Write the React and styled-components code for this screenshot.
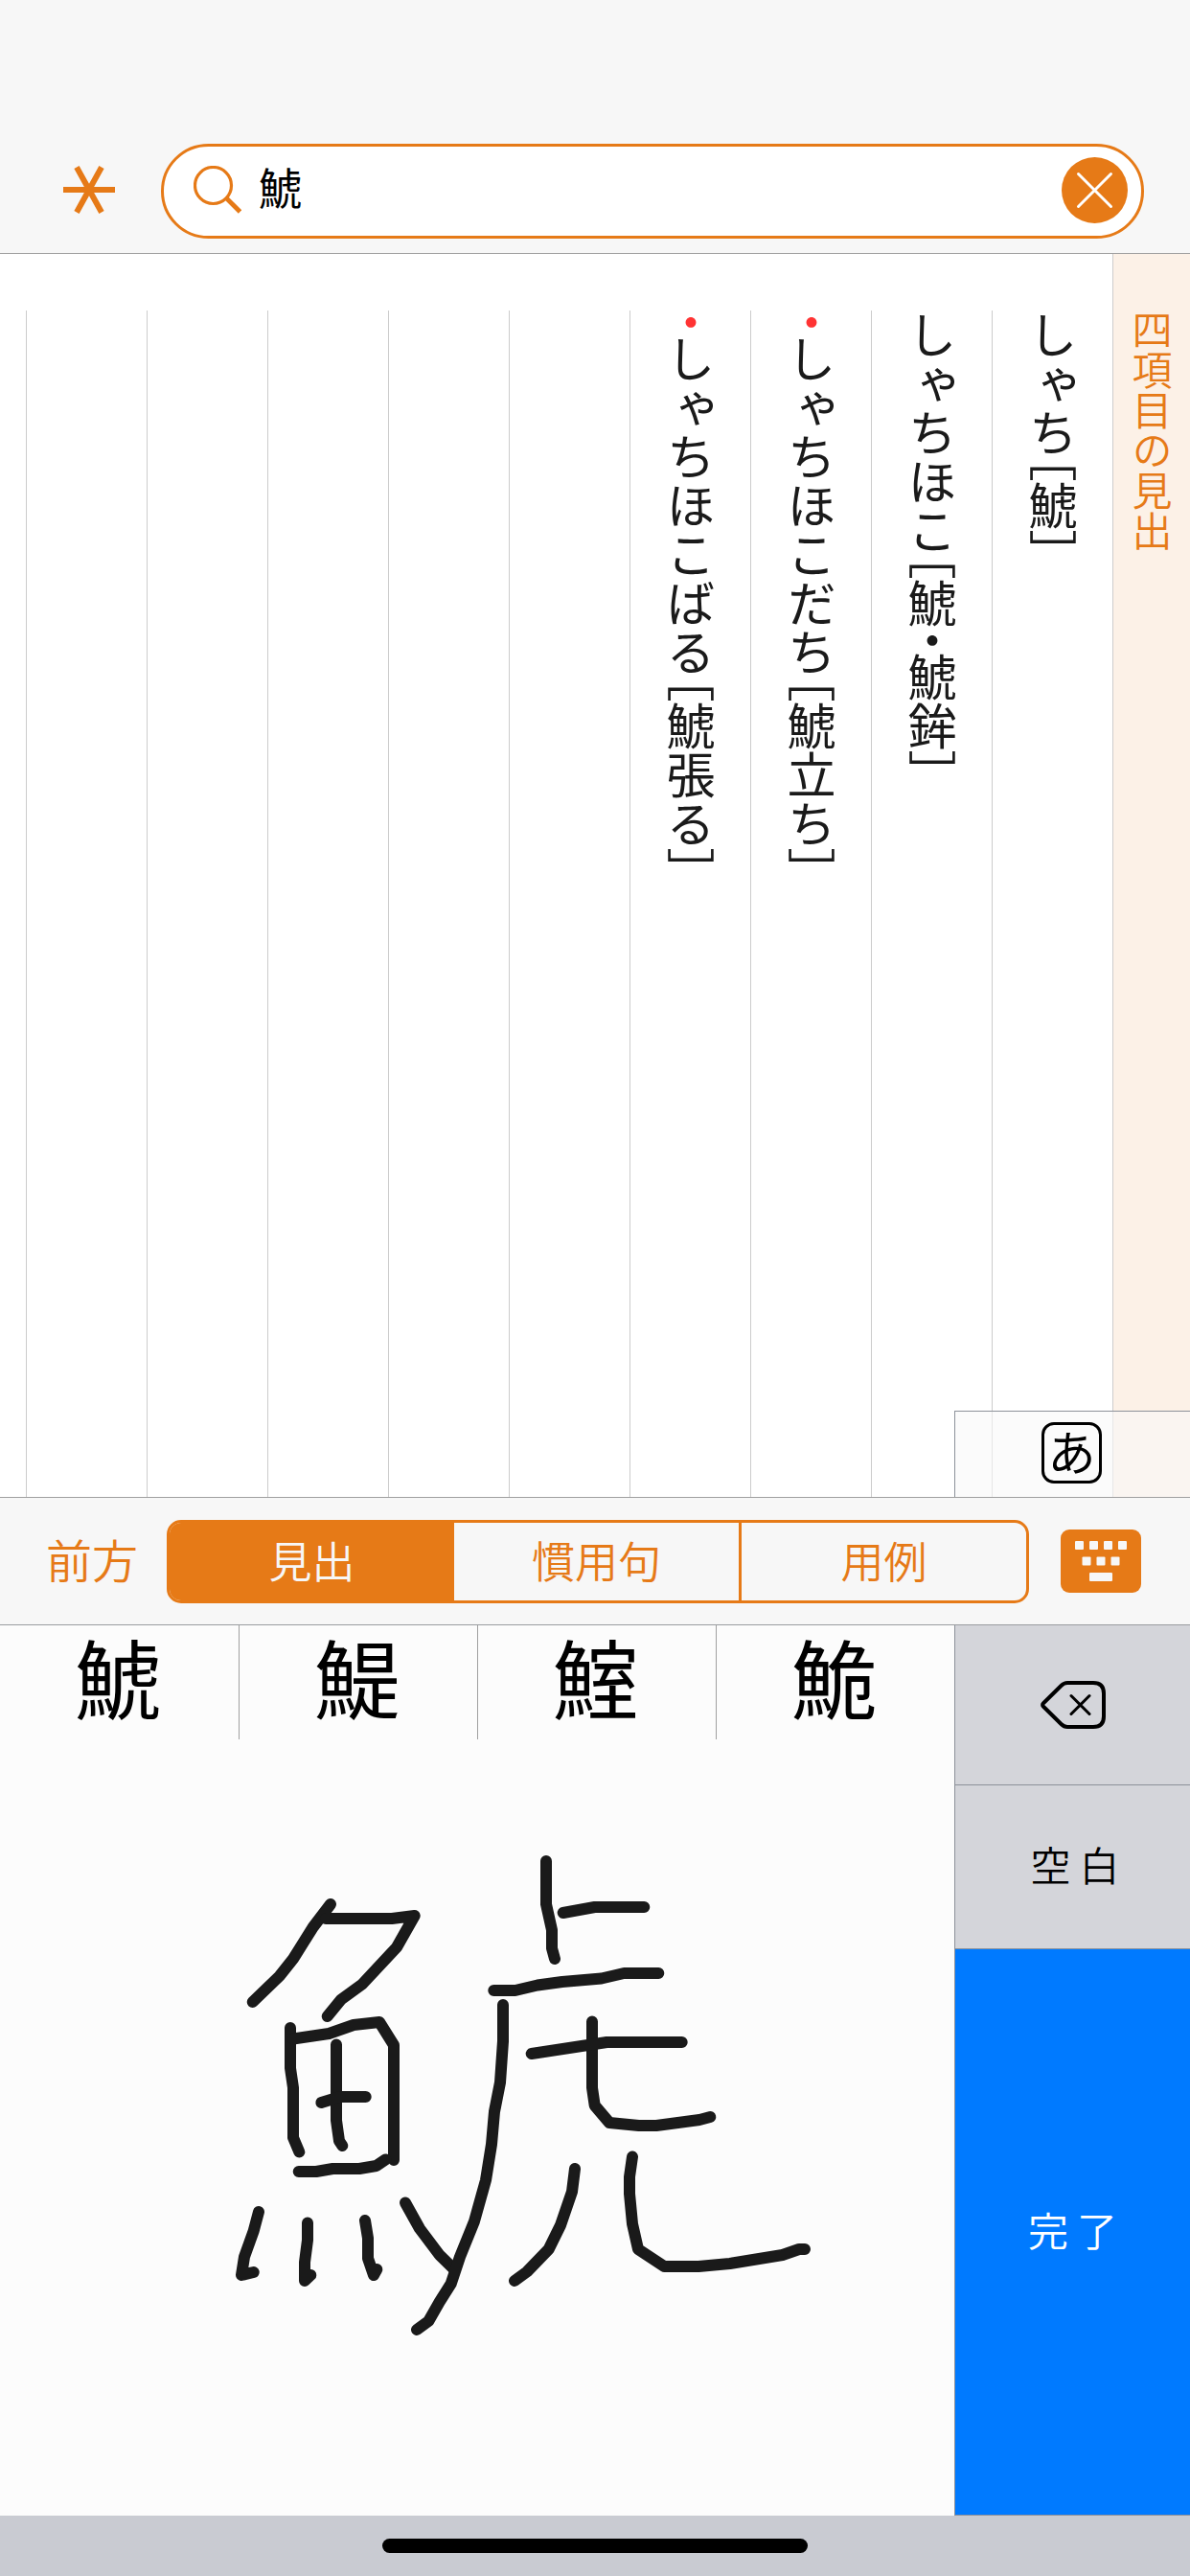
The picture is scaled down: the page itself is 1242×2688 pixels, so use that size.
import React, { useState } from 'react';
import styled, { createGlobalStyle } from 'styled-components';

const ORANGE = '#e67a17';

const GlobalStyle = createGlobalStyle`
  body {
    margin: 0;
    background: #fff;
    font-family: "Noto Sans CJK JP", sans-serif;
    font-weight: 350;
  }

  * {
    box-sizing: border-box;
  }

  button {
    font: inherit;
    color: inherit;
    background: none;
    border: 0;
    padding: 0;
  }
`;

const Screen = styled.div`
  width: 1242px;
  height: 2688px;
  display: flex;
  flex-direction: column;
  overflow: hidden;
`;

const Header = styled.header`
  height: 265px;
  padding: 150px 48px 0 66px;
  display: flex;
  align-items: flex-start;
  justify-content: space-between;
  background: #f7f7f7;
  border-bottom: 1px solid #a0a0a0;
`;

const MenuButton = styled.button`
  width: 54px;
  height: 96px;
  display: flex;
  align-items: center;
`;

const SearchBox = styled.div`
  width: 1026px;
  height: 99px;
  padding: 0 14px 3px 31px;
  display: flex;
  align-items: center;
  background: #fff;
  border: 3px solid ${ORANGE};
  border-radius: 50px;
`;

const SearchText = styled.span`
  flex: 1;
  margin-left: 18px;
  padding-bottom: 6px;
  font-size: 45px;
  line-height: 60px;
  font-weight: 400;
  color: #000;
`;

const ClearButton = styled.button`
  width: 69px;
  height: 69px;
  display: flex;
`;

const Results = styled.main`
  position: relative;
  height: 1297px;
  padding-left: 27px;
  display: flex;
  flex-direction: row-reverse;
  justify-content: flex-start;
  background: #fff;
`;

const SideTitle = styled.h1`
  width: 81px;
  margin: 0;
  padding-top: 58px;
  writing-mode: vertical-rl;
  font-size: 42px;
  font-weight: 350;
  line-height: 80px;
  color: ${ORANGE};
  background: #fcf1e7;
  border-left: 1px solid #ccc;
`;

const Entry = styled.div`
  width: 126px;
  padding-top: 0;
  margin-top: 59px;
  writing-mode: vertical-rl;
  font-size: 51px;
  line-height: 125px;
  font-weight: 400;
  font-feature-settings: "vert", "vhal";
  white-space: nowrap;
  color: #1a1a1a;
  border-left: 1px solid #ccc;
`;

const Mark = styled.span`
  color: #ff3333;
`;

const KanaSwitch = styled.div`
  position: absolute;
  right: 0;
  bottom: 0;
  width: 246px;
  height: 90px;
  padding: 11px 0 0 90px;
  background: rgba(248, 249, 249, 0.6);
  border: solid #8c9199;
  border-width: 1px 0 0 1px;
`;

const KanaKey = styled.button`
  width: 63px;
  height: 64px;
  padding-bottom: 7px;
  display: flex;
  align-items: center;
  justify-content: center;
  font-size: 50px;
  line-height: 58px;
  font-weight: 400;
  color: #000;
  border: 3px solid #000;
  border-radius: 13px;
`;

const Toolbar = styled.div`
  height: 134px;
  padding-right: 51px;
  display: flex;
  align-items: center;
  background: #f7f7f7;
  border-top: 1px solid #a0a0a0;
  border-bottom: 1px solid #999c9f;
`;

const MatchButton = styled.button`
  width: 174px;
  padding: 0 0 6px 18px;
  font-size: 48px;
  line-height: 60px;
  color: ${ORANGE};
`;

const Segments = styled.div`
  width: 900px;
  height: 87px;
  display: flex;
  border: 3px solid ${ORANGE};
  border-radius: 15px;
  overflow: hidden;
`;

const Segment = styled.button`
  flex: ${(p) => (p.$active ? '0 0 297px' : 1)};
  padding-bottom: 3px;
  font-size: 45px;
  line-height: 60px;
  color: ${(p) => (p.$active ? '#f7f7f7' : ORANGE)};
  background: ${(p) => (p.$active ? ORANGE : 'transparent')};

  &:nth-child(2) {
    flex: 0 0 300px;
    border-right: 3px solid ${ORANGE};
  }
`;

const KeyboardButton = styled.button`
  width: 84px;
  height: 66px;
  margin-left: auto;
  display: flex;
`;

const Keyboard = styled.section`
  height: 929px;
  display: flex;
`;

const WritingPad = styled.div`
  width: 996px;
  display: flex;
  flex-direction: column;
  background: #fcfcfc;
`;

const Candidates = styled.div`
  height: 119px;
  display: grid;
  grid-template-columns: repeat(4, 249px);
`;

const Candidate = styled.button`
  height: 119px;
  padding: 0 3px 14px 0;
  font-size: 90px;
  line-height: 105px;
  font-weight: 400;
  color: #000;

  & + & {
    border-left: 1px solid #a0a0a0;
  }
`;

const Ink = styled.svg`
  width: 996px;
  height: 810px;
  fill: none;
  stroke: #1a1a1a;
  stroke-width: 12;
  stroke-linecap: round;
  stroke-linejoin: round;
`;

const Keys = styled.div`
  width: 246px;
  display: flex;
  flex-direction: column;
  border-left: 1px solid #8c9199;
`;

const Key = styled.button`
  flex: 0 0 ${(p) => p.$height}px;
  display: flex;
  align-items: center;
  justify-content: center;
  gap: 9px;
  padding: 0 0 ${(p) => p.$lift || 0}px ${(p) => p.$shift || 0}px;
  font-size: 42px;
  color: ${(p) => (p.$primary ? '#fff' : '#000')};
  background: ${(p) => (p.$primary ? '#007aff' : '#d4d5da')};
  border-bottom: 1px solid #8c9199;
`;

const Footer = styled.footer`
  flex: 1;
  padding-top: 24px;
  display: flex;
  justify-content: center;
  background: #c9cbd2;
`;

const HomeBar = styled.div`
  width: 444px;
  height: 15px;
  border-radius: 8px;
  background: #000;
`;

const entries = [
  { text: 'しゃち［鯱］' },
  { text: 'しゃちほこ［鯱・鯱鉾］' },
  { text: 'しゃちほこだち［鯱立ち］', marked: true },
  { text: 'しゃちほこばる［鯱張る］', marked: true },
  { text: '' },
  { text: '' },
  { text: '' },
  { text: '' },
  { text: '' },
];

const tabs = ['見出', '慣用句', '用例'];
const candidates = ['鯱', '鯷', '鰘', '鮠'];

const strokes = [
  '345,1987 326.7,2011 306,2044 291.7,2062 263.7,2089',
  '340,2002 409,2002 432.7,1999 414,2032 378,2070.5 356,2086.5 341.7,2104',
  '303,2116 303,2158 306,2178.5 306,2230.5 312.3,2245.5',
  '306,2127.5 343.3,2122 369,2113 396,2110 411,2134 411,2254',
  '351,2133.5 351,2212.5 354,2234 357.3,2239',
  '335.3,2194 355,2188 381.7,2188',
  '311.7,2266 330,2266 347.3,2263 375,2263 392.7,2260 402.3,2253.5',
  '270,2308 264.7,2328 255,2355 252,2374 264.7,2371',
  '321,2319.5 321,2337.5 318,2360.5 318,2380 324.3,2374',
  '381,2317 384,2335.5 384,2356.5 390,2374 393.3,2368',
  '423,2298.5 438,2325.5 458.7,2353 474,2368',
  '525,2092 525,2130 522,2173 516,2203.5 513,2237.5 507,2275 495,2318 480,2355 470.7,2383 458.7,2402 447.3,2422 435,2431',
  '515.3,2077 537.7,2077 561,2071.5 586.7,2068 627.7,2064.5 651.3,2059 687.3,2059',
  '570,1942 570,1987 576,2014 576,2033 579,2044',
  '587.7,1996 620.7,1990 672.3,1990',
  '618,2109.5 618,2178.5 620.7,2197 636,2215 666.7,2218 685,2218 730,2212 741.3,2209',
  '554.7,2143 633.3,2131 711.7,2131',
  '600,2263 597,2287 585,2322 572.7,2347 550,2370.5 537,2380',
  '660,2250.5 657,2271.5 657,2289 660,2320.5 666,2347 693.3,2365 729,2365 761.7,2362 816.7,2353 834,2347 840,2347',
];

const AsteriskIcon = () => (
  <svg width="54" height="54" viewBox="-27 -27 54 54" stroke={ORANGE} strokeWidth="6">
    <path d="M-27 0H27M-13 -23.5L13 23.5M13 -23.5L-13 23.5" />
  </svg>
);

const SearchIcon = () => (
  <svg width="50" height="50" viewBox="0 0 50 50" fill="none" stroke={ORANGE}>
    <circle cx="20.5" cy="20.5" r="19" strokeWidth="3.2" />
    <path d="M34 33.5L48.5 48" strokeWidth="4.8" />
  </svg>
);

const ClearIcon = () => (
  <svg width="69" height="69" viewBox="0 0 69 69">
    <circle cx="34.5" cy="34.5" r="34.5" fill={ORANGE} />
    <path d="M17.5 17.5L51.5 51.5M51.5 17.5L17.5 51.5" stroke="#fff" strokeWidth="3" strokeLinecap="round" />
  </svg>
);

const KeyboardIcon = () => (
  <svg width="84" height="66" viewBox="0 0 84 66">
    <rect width="84" height="66" rx="9" fill={ORANGE} />
    <g fill="#f7f7f7">
      {[15, 30, 45, 60].map((x) => (
        <rect key={x} x={x} y="12" width="9" height="9" rx="1" />
      ))}
      {[22.5, 37.5, 52.5].map((x) => (
        <rect key={x} x={x} y="28.5" width="9" height="9" rx="1" />
      ))}
      <rect x="30" y="45" width="24" height="9" rx="1" />
    </g>
  </svg>
);

const DeleteIcon = () => (
  <svg width="68" height="50" viewBox="0 0 68 50" fill="none" stroke="#000" strokeLinejoin="round" strokeLinecap="round">
    <path
      d="M3 23.2L21.5 5Q24.5 2 28 2H55Q66 2 66 13V37Q66 48 55 48H28Q24.5 48 21.5 45L3 26.8Q1.2 25 3 23.2Z"
      strokeWidth="4"
    />
    <path d="M32 15.5L51 34.5M51 15.5L32 34.5" strokeWidth="3" />
  </svg>
);

function App() {
  const [activeTab, setActiveTab] = useState(tabs[0]);

  return (
    <Screen>
      <GlobalStyle />
      <Header>
        <MenuButton>
          <AsteriskIcon />
        </MenuButton>
        <SearchBox>
          <SearchIcon />
          <SearchText>鯱</SearchText>
          <ClearButton>
            <ClearIcon />
          </ClearButton>
        </SearchBox>
      </Header>

      <Results>
        <SideTitle>四項目の見出</SideTitle>
        {entries.map((entry, i) => (
          <Entry key={i}>
            {entry.marked && <Mark>・</Mark>}
            {entry.text}
          </Entry>
        ))}
        <KanaSwitch>
          <KanaKey>あ</KanaKey>
        </KanaSwitch>
      </Results>

      <Toolbar>
        <MatchButton>前方</MatchButton>
        <Segments>
          {tabs.map((tab) => (
            <Segment key={tab} $active={tab === activeTab} onClick={() => setActiveTab(tab)}>
              {tab}
            </Segment>
          ))}
        </Segments>
        <KeyboardButton>
          <KeyboardIcon />
        </KeyboardButton>
      </Toolbar>

      <Keyboard>
        <WritingPad>
          <Candidates>
            {candidates.map((c) => (
              <Candidate key={c}>{c}</Candidate>
            ))}
          </Candidates>
          <Ink viewBox="0 1815 996 810">
            {strokes.map((points) => (
              <polyline key={points} points={points} />
            ))}
          </Ink>
        </WritingPad>
        <Keys>
          <Key $height={167}>
            <DeleteIcon />
          </Key>
          <Key $height={171} $shift={5} $lift={7}>
            <span>空</span>
            <span>白</span>
          </Key>
          <Key $height={591} $lift={8} $primary>
            <span>完</span>
            <span>了</span>
          </Key>
        </Keys>
      </Keyboard>

      <Footer>
        <HomeBar />
      </Footer>
    </Screen>
  );
}

export default App;
